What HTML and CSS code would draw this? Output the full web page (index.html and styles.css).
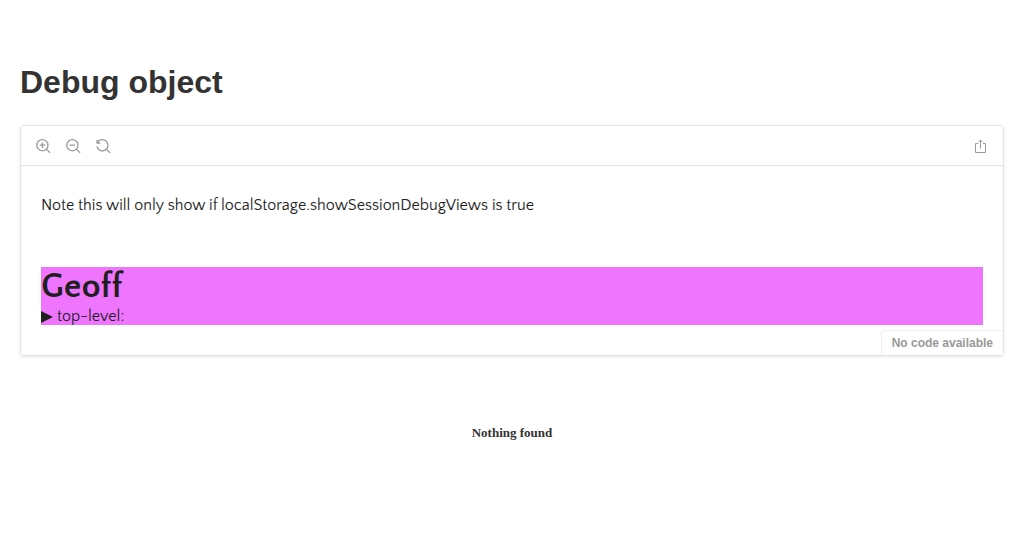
FILE: index.html
```html
<!DOCTYPE html>
<html lang="en">
<head>
<meta charset="utf-8">
<meta name="viewport" content="width=device-width, initial-scale=1">
<title>Debug object</title>
<link rel="stylesheet" href="styles.css">
</head>
<body>
<main class="docs">
  <h1 class="title">Debug object</h1>
  <section class="preview">
    <div class="toolbar">
      <div class="tools">
        <button class="tool" type="button" aria-label="Zoom in">
          <svg class="icon" viewBox="0 0 14 14"><circle cx="6.4" cy="6.2" r="5.6"/><path d="M10.3 10.1l3.8 3.8M3.6 6.2h5.6M6.4 3.4v5.6"/></svg>
        </button>
        <button class="tool" type="button" aria-label="Zoom out">
          <svg class="icon" viewBox="0 0 14 14"><circle cx="6.4" cy="6.2" r="5.6"/><path d="M10.3 10.1l3.8 3.8M3.6 6.2h5.6"/></svg>
        </button>
        <button class="tool" type="button" aria-label="Reset zoom">
          <svg class="icon" viewBox="0 0 14 14"><path d="M1.4 3.7A5.6 5.6 0 1 1 .9 7.3M1.1 1v3h3M10.3 10.1l3.8 3.8"/></svg>
        </button>
      </div>
      <a class="tool" href="#canvas" aria-label="Open canvas in new tab">
        <svg class="icon share" viewBox="0 0 14 14"><path d="M5 4.5H2.5v9h10v-9H10M7.5 9.5V1M5.3 3.2L7.5 1l2.2 2.2"/></svg>
      </a>
    </div>
    <div class="story" id="canvas">
      <p class="note">Note this will only show if localStorage.showSessionDebugViews is true</p>
      <div class="debug">
        <h2 class="name">Geoff</h2>
        <details><summary class="summary">top-level:</summary></details>
      </div>
    </div>
    <button class="code" type="button" disabled>No code available</button>
  </section>
  <p class="empty">Nothing found</p>
</main>
</body>
</html>
```
FILE: styles.css
```css
* { box-sizing: border-box; }
body { margin: 0; background: #fff; color: #333; font-family: "Liberation Sans", Arial, sans-serif; }
.docs { max-width: 1040px; margin: 0 auto; padding: 64px 20px; }
.title { margin: 0 0 25px; font-size: 32px; line-height: 36px; }
.preview { position: relative; border: 1px solid #e3e3e3; border-radius: 4px; box-shadow: 0 1px 3px rgba(0, 0, 0, .1); }
.toolbar { display: flex; justify-content: space-between; align-items: center; height: 40px; padding: 1px 16px 0 15px; border-bottom: 1px solid #e3e3e3; }
.tools { display: flex; gap: 16px; }
.tool { display: block; width: 14px; height: 14px; padding: 0; border: 0; background: none; color: #999; }
.icon { display: block; width: 14px; height: 14px; overflow: visible; fill: none; stroke: currentColor; stroke-width: 1.3; }
.share { stroke-width: 1; }
.story { padding: 28px 20px 30px; color: #1f1f1f; font-family: "Quattrocento Sans", Lato, sans-serif; font-size: 16px; line-height: 22px; }
.note { margin: 0 0 51px; }
.debug { background: #ef75ff; }
.name { margin: 0; font-size: 35px; line-height: 40px; }
.summary { line-height: 18px; list-style: none; }
.summary::-webkit-details-marker { display: none; }
.summary::before { content: ""; display: inline-block; margin-right: 4px; border: solid transparent; border-width: 6px 0 6px 12px; border-left-color: currentColor; vertical-align: -2px; }
.code { position: absolute; right: 0; bottom: 0; padding: 4px 10px; border: 1px solid #eee; border-width: 1px 0 0 1px; border-radius: 4px 0 0 0; background: #fff; color: #999; font: bold 12px/16px "Liberation Sans", Arial, sans-serif; }
.empty { margin: 69px 0 0; font: bold 13px/16px "Liberation Serif", "Times New Roman", serif; text-align: center; }
```
